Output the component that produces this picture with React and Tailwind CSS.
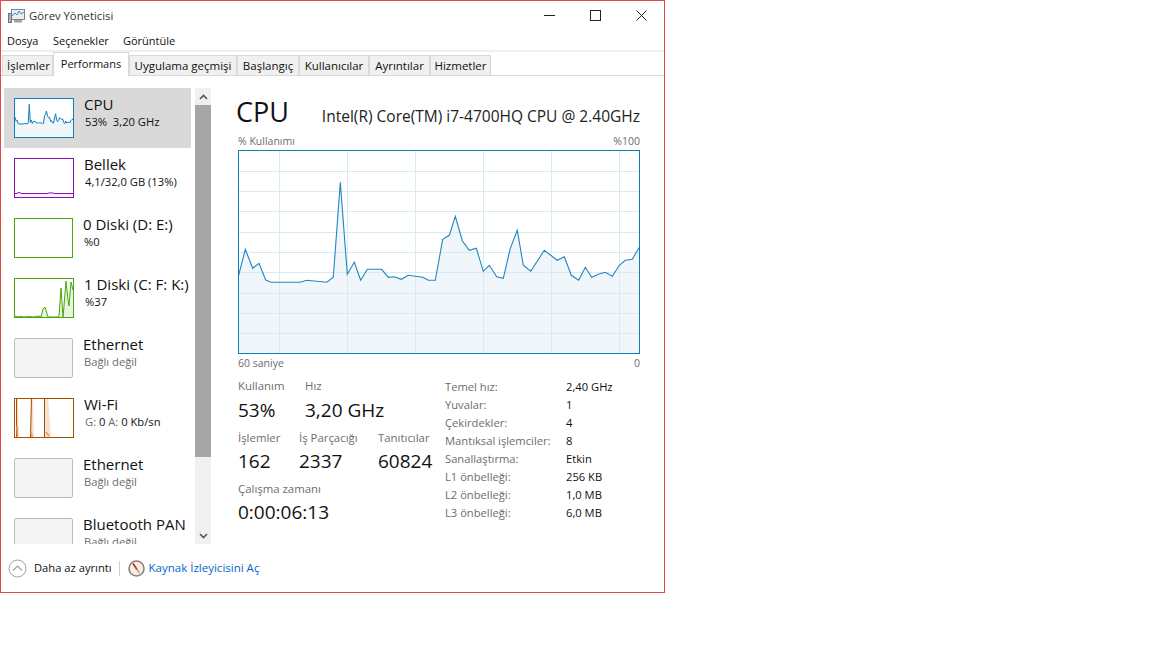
const cpu = [[238,278],[245.3,249.3],[252.7,268.3],[259,263.3],[265.7,280],[271,282.3],[300,282.3],[306.7,280.3],[326.7,282.3],[333.3,277.3],[340.3,182.3],[347.3,274.3],[354.3,262.3],[360.7,280.3],[367.3,269.3],[381.7,269.3],[388.3,277.3],[394.3,276.7],[401.3,279.3],[408.3,275.3],[422.7,277.3],[428.3,280.3],[435.3,280.3],[442.7,239.3],[449.3,235.3],[455.3,216.3],[462.3,240.7],[469.3,250.3],[476.3,248.3],[483.3,271.3],[489.3,265.3],[496.7,276.7],[503.3,278.3],[510.3,248.3],[517.3,230.3],[523.3,265.3],[530.7,271.3],[544.3,250.3],[557.3,260.3],[564.3,256.7],[571.3,275.3],[578.7,280.3],[585.3,267.3],[591.7,277.3],[598.3,274.3],[605.3,272.3],[612.3,276.3],[619.3,265.3],[625.3,260.3],[632.3,259.3],[640,246]];
const hLines = [171.5,191.5,211.5,232.5,252.5,272.5,293.5,313.5,333.5];
const vLines = [279.5,347.5,415.5,483.5,551.5,619.5];

const toPts = (arr) => arr.map((p) => p.join(",")).join(" ");
const cpuMini = cpu.map(([x, y]) => [((x - 238) * 60) / 402, ((y - 150) * 40) / 204]);

const memPts = [[0,35.5],[3,35.5],[4,34.6],[6,34.6],[7,35.5],[34,35.5],[35,34.6],[37,35.3],[38,34.6],[40,35.5],[60,35.5]];
const disk1Pts = [[0,39],[2,38],[3,39],[7,38.4],[9,39],[16,38.6],[20,39],[24,38],[27,39],[29,31],[31,29],[34,39],[44,39],[45,38],[47,10],[49,39],[50,28],[52,3],[54,22],[55,28],[57,4],[59,12],[60,12]];

function Spark({ pts, color, fill }) {
  const area = `0,40 ${toPts(pts)} 60,40`;
  return (
    <svg width="58" height="38" viewBox="1 1 58 38" className="block">
      <polygon points={area} fill={fill} />
      <polyline points={toPts(pts)} fill="none" stroke={color} strokeWidth="1" />
    </svg>
  );
}

function WifiSpark() {
  return (
    <svg width="58" height="38" viewBox="1 1 58 38" className="block">
      <polygon points="2,0 4,0 5,40 2,40" fill="#f3dcc8" />
      <polygon points="17,0 19,0 20,40 16,40" fill="#f3e1d1" />
      <polygon points="31,0 34,0 37,40 30,40" fill="#f3e1d1" />
      <path d="M2.5 0 L2.5 40 M17.5 0 L16.5 40 M30.5 0 L30.5 40" stroke="#a74f01" strokeWidth="1" fill="none" />
      <path d="M3 28 L3.5 38 M17 34 L18 39 M32 34 L35 38" stroke="#ee9a66" strokeWidth="1.6" fill="none" />
    </svg>
  );
}

function Thumb({ border, children }) {
  return (
    <div className={`w-[60px] h-[40px] border bg-white ${border}`}>{children}</div>
  );
}

function SideItem({ selected, thumb, name, sub }) {
  return (
    <div className={`w-[187px] h-[60px] shrink-0 flex pl-[10px] pt-[10px] ${selected ? "bg-[#d9d9d9]" : ""}`}>
      {thumb}
      <div className="ml-[10px] w-[110px]">
        <div className="mt-[-1px] text-[15px] leading-[14px] text-[#111] whitespace-nowrap">{name}</div>
        <div className="mt-[3px] ml-px text-[11.2px] leading-[16px] whitespace-pre">{sub}</div>
      </div>
    </div>
  );
}

function Offline() {
  return <div className="w-[60px] h-[40px] border border-[#bcbcbc] rounded-[2px] bg-[#f4f4f4]" />;
}

const tabs = [
  { label: "İşlemler", cls: "w-[51px] pl-[2px]" },
  { label: "Performans", cls: "w-[76px]", active: true },
  { label: "Uygulama geçmişi", cls: "w-[108px]" },
  { label: "Başlangıç", cls: "w-[62px]" },
  { label: "Kullanıcılar", cls: "w-[70px]" },
  { label: "Ayrıntılar", cls: "w-[61px]" },
  { label: "Hizmetler", cls: "w-[61px]" },
];

const specs = [
  ["Temel hız:", "2,40 GHz"],
  ["Yuvalar:", "1"],
  ["Çekirdekler:", "4"],
  ["Mantıksal işlemciler:", "8"],
  ["Sanallaştırma:", "Etkin"],
  ["L1 önbelleği:", "256 KB"],
  ["L2 önbelleği:", "1,0 MB"],
  ["L3 önbelleği:", "6,0 MB"],
];

function Stat({ label, value, cls, valueCls = "mt-[3px]" }) {
  return (
    <div className={cls}>
      <div className="text-[11.4px] leading-[16px] text-[#6d6d6d] whitespace-nowrap">{label}</div>
      <div className={`${valueCls} text-[19px] leading-[24px] text-[#111] whitespace-nowrap`}>{value}</div>
    </div>
  );
}

export default function App() {
  return (
    <div className="w-[1152px] h-[648px] bg-white font-['Open_Sans','Noto_Sans',sans-serif] text-[#111] overflow-hidden">
      <div className="w-[665px] h-[593px] border border-[#e04b4b] flex flex-col">
        {/* title bar */}
        <div className="h-[29px] shrink-0 flex items-center pl-[7px] relative">
          <svg width="17" height="16" viewBox="0 0 17 16">
            <rect x="3.5" y="1.5" width="13" height="10" fill="#e9eef2" stroke="#7b8790" />
            <path d="M4 8 L7 5 L9 7 L11 3 L13 6 L16 4" fill="none" stroke="#3f8fc4" />
            <rect x="0.5" y="5.5" width="3" height="9" fill="#aab2b8" stroke="#6f777d" />
            <rect x="6" y="12" width="8" height="2.5" fill="#9aa3a9" />
          </svg>
          <span className="ml-[4px] mt-px text-[11.3px] text-[#333] whitespace-nowrap">Görev Yöneticisi</span>
          <div className="ml-auto flex items-center">
            <div className="w-[46px] h-[29px] flex items-center justify-center">
              <div className="w-[11px] h-px bg-[#222]" />
            </div>
            <div className="w-[46px] h-[29px] flex items-center justify-center">
              <div className="w-[11px] h-[11px] border border-[#222]" />
            </div>
            <div className="w-[46px] h-[29px] flex items-center justify-center">
              <svg width="11" height="11" viewBox="0 0 11 11">
                <path d="M0.5 0.5 L10.5 10.5 M10.5 0.5 L0.5 10.5" stroke="#222" strokeWidth="1" />
              </svg>
            </div>
          </div>
        </div>

        {/* menu */}
        <div className="h-[20px] shrink-0 flex items-center pl-[6px] pt-[2px] text-[11px] text-[#111]">
          <span className="w-[46px]">Dosya</span>
          <span className="w-[70px]">Seçenekler</span>
          <span>Görüntüle</span>
        </div>
        <div className="h-[2px] shrink-0 bg-[#f0f0f0]" />

        {/* tabs */}
        <div className="h-[24px] shrink-0 flex items-end pl-[1px] border-b border-[#d9d9d9]">
          {tabs.map((t) =>
            t.active ? (
              <div key={t.label} className={`${t.cls} h-[24px] mb-[-1px] bg-white border border-b-0 border-[#d9d9d9] flex items-center justify-center text-[11px] pb-[1px] whitespace-nowrap`}>
                {t.label}
              </div>
            ) : (
              <div key={t.label} className={`${t.cls} h-[20px] bg-[#f0f0f0] border-l border-t border-r border-[#d9d9d9] flex items-center justify-center text-[11.5px] pt-[1px] whitespace-nowrap`}>
                {t.label}
              </div>
            )
          )}
        </div>

        {/* body */}
        <div className="h-[468px] shrink-0 flex">
          <div className="w-[211px] shrink-0 pt-[12px] flex">
            <div className="w-[190px] ml-[3px] flex flex-col overflow-hidden">
              <SideItem
                selected
                name="CPU"
                sub="53%  3,20 GHz"
                thumb={<Thumb border="border-[#117dbb]"><Spark pts={cpuMini} color="#117dbb" fill="#f1f6fa" /></Thumb>}
              />
              <SideItem
                name="Bellek"
                sub="4,1/32,0 GB (13%)"
                thumb={<Thumb border="border-[#8b12ae]"><Spark pts={memPts} color="#8b12ae" fill="#f4f2f4" /></Thumb>}
              />
              <SideItem
                name="0 Diski (D: E:)"
                sub="%0"
                thumb={<Thumb border="border-[#4da60c]"><div /></Thumb>}
              />
              <SideItem
                name="1 Diski (C: F: K:)"
                sub="%37"
                thumb={<Thumb border="border-[#4da60c]"><Spark pts={disk1Pts} color="#4da60c" fill="#e9f4df" /></Thumb>}
              />
              <SideItem name="Ethernet" sub={<span className="text-[#6d6d6d]">Bağlı değil</span>} thumb={<Offline />} />
              <SideItem
                name="Wi-Fi"
                sub={<span><span className="text-[#6d6d6d]">G:</span> 0 <span className="text-[#6d6d6d]">A:</span> 0 Kb/sn</span>}
                thumb={<Thumb border="border-[#a74f01]"><WifiSpark /></Thumb>}
              />
              <SideItem name="Ethernet" sub={<span className="text-[#6d6d6d]">Bağlı değil</span>} thumb={<Offline />} />
              <SideItem name="Bluetooth PAN" sub={<span className="text-[#6d6d6d]">Bağlı değil</span>} thumb={<Offline />} />
            </div>
            <div className="w-[16px] ml-[1px] bg-[#f0f0f0] flex flex-col shrink-0">
              <div className="h-[17px] flex items-center justify-center">
                <svg width="9" height="6" viewBox="0 0 9 6"><path d="M1 5 L4.5 1.5 L8 5" fill="none" stroke="#555" strokeWidth="1.6" /></svg>
              </div>
              <div className="h-[352px] bg-[#a6a6a6]" />
              <div className="flex-1 flex items-end justify-center pb-[5px]">
                <svg width="9" height="6" viewBox="0 0 9 6"><path d="M1 1 L4.5 4.5 L8 1" fill="none" stroke="#555" strokeWidth="1.6" /></svg>
              </div>
            </div>
          </div>

          {/* main panel */}
          <div className="flex-1 pl-[26px] pr-[24px]">
            <div className="h-[57px] flex items-end justify-between">
              <span className="ml-[-2px] mb-[3px] text-[27px] leading-[36px] text-[#111]">CPU</span>
              <span className="mb-[6px] text-[15.5px] leading-[22px] text-[#222] whitespace-nowrap">Intel(R) Core(TM) i7-4700HQ CPU @ 2.40GHz</span>
            </div>
            <div className="h-[16px] flex justify-between text-[10.5px] leading-[16px] text-[#6d6d6d]">
              <span>% Kullanımı</span>
              <span>%100</span>
            </div>
            <div className="mt-px w-[402px] h-[204px] border border-[#117dbb]">
              <svg width="400" height="202" viewBox="239 151 400 202" className="block">
                <polygon points={`238,353 ${toPts(cpu)} 640,353`} fill="#f1f6fa" />
                {hLines.map((y) => (
                  <line key={y} x1="239" x2="639" y1={y} y2={y} stroke="#d9eaf4" />
                ))}
                {vLines.map((x) => (
                  <line key={x} x1={x} x2={x} y1="151" y2="353" stroke="#d9eaf4" />
                ))}
                <polyline points={toPts(cpu)} fill="none" stroke="#2186c1" strokeWidth="1.1" />
              </svg>
            </div>
            <div className="h-[16px] mt-px flex justify-between text-[10.5px] leading-[16px] text-[#6d6d6d]">
              <span>60 saniye</span>
              <span>0</span>
            </div>

            <div className="mt-[7px] flex">
              <div className="w-[207px] shrink-0">
                <div className="flex">
                  <Stat label="Kullanım" value="53%" cls="w-[67px]" valueCls="mt-[4px]" />
                  <Stat label="Hız" value="3,20 GHz" valueCls="mt-[4px]" />
                </div>
                <div className="mt-[8px] flex">
                  <Stat label="İşlemler" value="162" cls="w-[61px]" />
                  <Stat label="İş Parçacığı" value="2337" cls="w-[79px]" />
                  <Stat label="Tanıtıcılar" value="60824" />
                </div>
                <div className="mt-[8px]">
                  <Stat label="Çalışma zamanı" value="0:00:06:13" />
                </div>
              </div>
              <div className="grid grid-cols-[121px_auto] auto-rows-[18px] text-[11.2px] leading-[18px] whitespace-nowrap">
                {specs.map(([k, v]) => [
                  <span key={k} className="text-[#6d6d6d]">{k}</span>,
                  <span key={k + "v"} className="text-[#111]">{v}</span>,
                ])}
              </div>
            </div>
          </div>
        </div>

        {/* footer */}
        <div className="flex-1 flex items-center pl-[7px]">
          <svg width="19" height="19" viewBox="0 0 19 19">
            <circle cx="9.5" cy="9.5" r="8.5" fill="#fff" stroke="#a0a0a0" />
            <path d="M5 11.5 L9.5 7 L14 11.5" fill="none" stroke="#a0a0a0" strokeWidth="1.2" />
          </svg>
          <span className="ml-[7px] text-[11.2px] text-[#111] whitespace-nowrap">Daha az ayrıntı</span>
          <div className="ml-[7px] w-px h-[15px] bg-[#cfcfcf]" />
          <svg width="17" height="17" viewBox="0 0 17 17" className="ml-[8px]">
            <circle cx="8.5" cy="8.5" r="7.5" fill="#f5efe6" stroke="#8a8178" strokeWidth="1.6" />
            <path d="M5 3.5 L9 9.5" stroke="#c8332b" strokeWidth="1.8" />
            <path d="M9 9.5 L11.5 13" stroke="#a8a29a" strokeWidth="1.4" />
          </svg>
          <span className="ml-[4px] text-[11.5px] text-[#0066cc] whitespace-nowrap">Kaynak İzleyicisini Aç</span>
        </div>
      </div>
    </div>
  );
}
